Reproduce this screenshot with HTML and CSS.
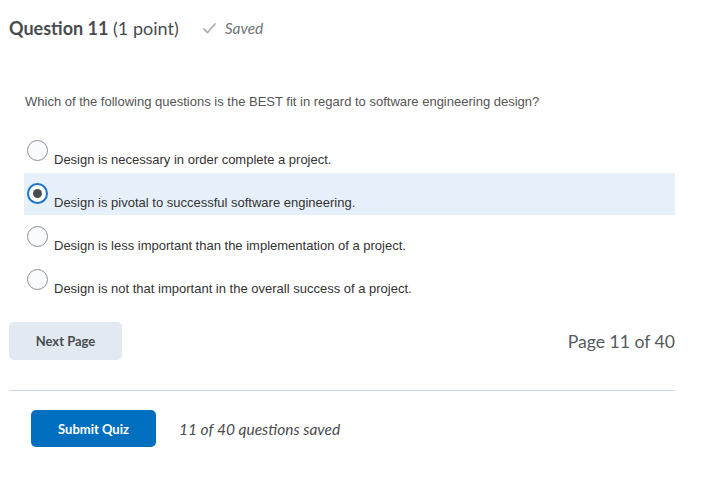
FILE: index.html
```html
<!DOCTYPE html>
<html>
<head>
<meta charset="utf-8">
<link rel="stylesheet" href="styles.css">
</head>
<body>
<div class="page">
  <div class="qhead">
    <h1 class="qtitle"><strong>Question 11</strong> (1 point)</h1>
    <span class="saved">
      <svg class="check" width="13" height="11" viewBox="0 0 13 11"><polyline points="1,6 4.5,9.5 12,1" fill="none" stroke="#a9b0b6" stroke-width="1.8" stroke-linecap="round" stroke-linejoin="round"/></svg>
      <em>Saved</em>
    </span>
  </div>
  <p class="question">Which of the following questions is the BEST fit in regard to software engineering design?</p>
  <div class="options">
    <div class="opt"><span class="radio"></span><span class="otext">Design is necessary in order complete a project.</span></div>
    <div class="opt sel"><span class="radio on"><span class="dot"></span></span><span class="otext">Design is pivotal to successful software engineering.</span></div>
    <div class="opt"><span class="radio"></span><span class="otext">Design is less important than the implementation of a project.</span></div>
    <div class="opt"><span class="radio"></span><span class="otext">Design is not that important in the overall success of a project.</span></div>
  </div>
  <div class="nav">
    <button class="btn next">Next Page</button>
    <span class="pagenum">Page 11 of 40</span>
  </div>
  <hr class="rule">
  <div class="submit">
    <button class="btn primary">Submit Quiz</button>
    <em class="status">11 of 40 questions saved</em>
  </div>
</div>
</body>
</html>
```
FILE: styles.css
```css
html, body { margin: 0; padding: 0; background: #fff; }
body { font-family: Lato, "Noto Sans", sans-serif; color: #494c4e; }
.page { width: 666px; padding-left: 9px; }
.qhead { display: flex; align-items: center; height: 40px; padding-top: 8px; }
.qtitle { margin: 0; font-size: 18px; font-weight: 400; color: #494c4e; line-height: 40px; }
.qtitle strong { font-weight: 700; }
.saved { display: flex; align-items: center; margin-left: 24px; color: #6e7376; font-size: 15.5px; }
.check { margin-right: 9px; margin-top: 1px; }
.saved em { font-style: italic; }
.question { margin: 46px 0 0 16px; font-family: "Liberation Sans", Arial, sans-serif; font-size: 13px; line-height: 15px; color: #555; }
.options { margin-top: 21px; margin-left: 15px; width: 651px; }
.opt { display: flex; align-items: flex-start; height: 43px; padding-left: 3px; box-sizing: border-box; }
.opt.sel { background: #e6f0fa; height: 42px; margin-bottom: 1px; }
.radio { width: 21px; height: 21px; box-sizing: border-box; border: 1px solid #8a9095; border-radius: 50%; background: #f9fbff; margin-top: 10px; flex: none; display: flex; align-items: center; justify-content: center; }
.radio.on { border: 2px solid #1a73c9; background: #fff; }
.dot { width: 9px; height: 9px; border-radius: 50%; background: #494c4e; }
.otext { margin-left: 6px; margin-top: 22px; font-family: "Liberation Sans", Arial, sans-serif; font-size: 13px; line-height: 15px; color: #333; }
.nav { display: flex; align-items: center; justify-content: space-between; margin-top: 20px; }
.btn { font-family: Lato, "Noto Sans", sans-serif; font-weight: 700; font-size: 13px; border: none; border-radius: 5px; cursor: pointer; }
.next { width: 113px; height: 38px; background: #e3e9f1; color: #494c4e; }
.pagenum { font-size: 17.6px; color: #565a5c; }
.rule { border: none; border-top: 1px solid #d3d9e3; margin: 30px 0 0 0; height: 0; }
.submit { display: flex; align-items: center; margin-top: 19px; padding-left: 22px; }
.primary { width: 125px; height: 37px; background: #006fbf; color: #fff; }
.status { margin-left: 23px; font-size: 15.5px; color: #494c4e; font-style: italic; }
```
